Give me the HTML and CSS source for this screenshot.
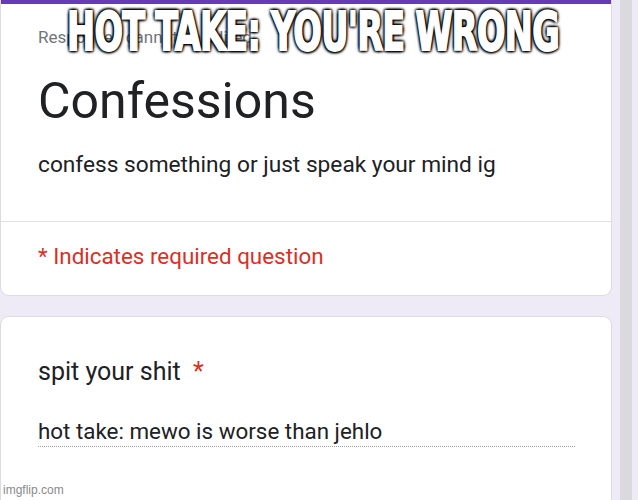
FILE: index.html
```html
<!DOCTYPE html>
<html>
<head>
<meta charset="utf-8">
<link rel="stylesheet" href="styles.css">
</head>
<body>
<div class="page">
  <main class="forms">
    <section class="card header-card">
      <div class="accent"></div>
      <div class="header-body">
        <div class="notice">Responses cannot be edited</div>
        <h1 class="title">Confessions</h1>
        <p class="desc">confess something or just speak your mind ig</p>
      </div>
      <div class="required">* Indicates required question</div>
    </section>
    <section class="card question-card">
      <div class="question">spit your shit <span class="star">*</span></div>
      <div class="answer">hot take: mewo is worse than jehlo</div>
    </section>
  </main>
  <div class="scroll-gutter"><div class="scroll-thumb"></div></div>
</div>
<div class="meme-caption">HOT TAKE: YOU'RE WRONG</div>
<div class="watermark">imgflip.com</div>
</body>
</html>
```
FILE: styles.css
```css
html, body {
  margin: 0;
  height: 100%;
  overflow: hidden;
  background: #eeeaf6;
  font-family: Roboto, "Liberation Sans", sans-serif;
}
.page {
  display: flex;
  height: 500px;
}
.forms {
  width: 612px;
  flex: none;
  display: flex;
  flex-direction: column;
  gap: 20px;
}
.card {
  background: #fff;
  border: 1px solid #dcdce0;
  border-radius: 9px;
}
.header-card {
  border-top: none;
  border-radius: 0 0 9px 9px;
  overflow: hidden;
}
.accent {
  height: 4px;
  background: #673ab7;
}
.header-body {
  padding: 23px 37px 42px;
  border-bottom: 1px solid #e0e0e4;
}
.notice {
  font-size: 17px;
  color: #70757a;
  line-height: 20px;
}
.title {
  margin: 24px 0 0;
  font-size: 50px;
  font-weight: 400;
  color: #202124;
  line-height: 60px;
}
.desc {
  margin: 20px 0 0;
  font-size: 22.7px;
  color: #202124;
  line-height: 28px;
}
.required {
  padding: 20px 37px 25px;
  font-size: 22.4px;
  line-height: 28px;
  color: #d93025;
}
.question-card {
  flex: 1;
  padding: 40px 37px 0;
  border-radius: 9px 9px 0 0;
  border-bottom: none;
}
.question {
  font-size: 25px;
  line-height: 30px;
  color: #202124;
}
.star {
  color: #d93025;
  margin-left: 6px;
}
.answer {
  margin-top: 30px;
  width: 537px;
  font-size: 22.4px;
  line-height: 28px;
  color: #202124;
  border-bottom: 1px dotted #9aa0a6;
  padding-bottom: 1px;
}
.scroll-gutter {
  flex: 1;
  display: flex;
  padding-left: 8px;
  padding-right: 6px;
}
.scroll-thumb {
  flex: 1;
  background: #d9d9de;
}
.meme-caption {
  position: absolute;
  top: 3px;
  left: -100px;
  width: 826px;
  text-align: center;
  white-space: nowrap;
  font-family: "DejaVu Sans Condensed", "DejaVu Sans", sans-serif;
  font-weight: bold;
  font-size: 54px;
  line-height: 58px;
  color: #fff;
  letter-spacing: -1px;
  transform: scaleX(0.69);
  -webkit-text-stroke: 1.8px #fff;
  text-shadow: 0 0 3px #000, 0 0 4px #000, 2px 2px 3px #000, -2px -2px 3px #000, 2px -2px 3px #000, -2px 2px 3px #000;
}
.watermark {
  position: absolute;
  left: 3px;
  bottom: 3px;
  font-family: "Liberation Sans", sans-serif;
  font-size: 12px;
  color: #8a8a8a;
}
```
